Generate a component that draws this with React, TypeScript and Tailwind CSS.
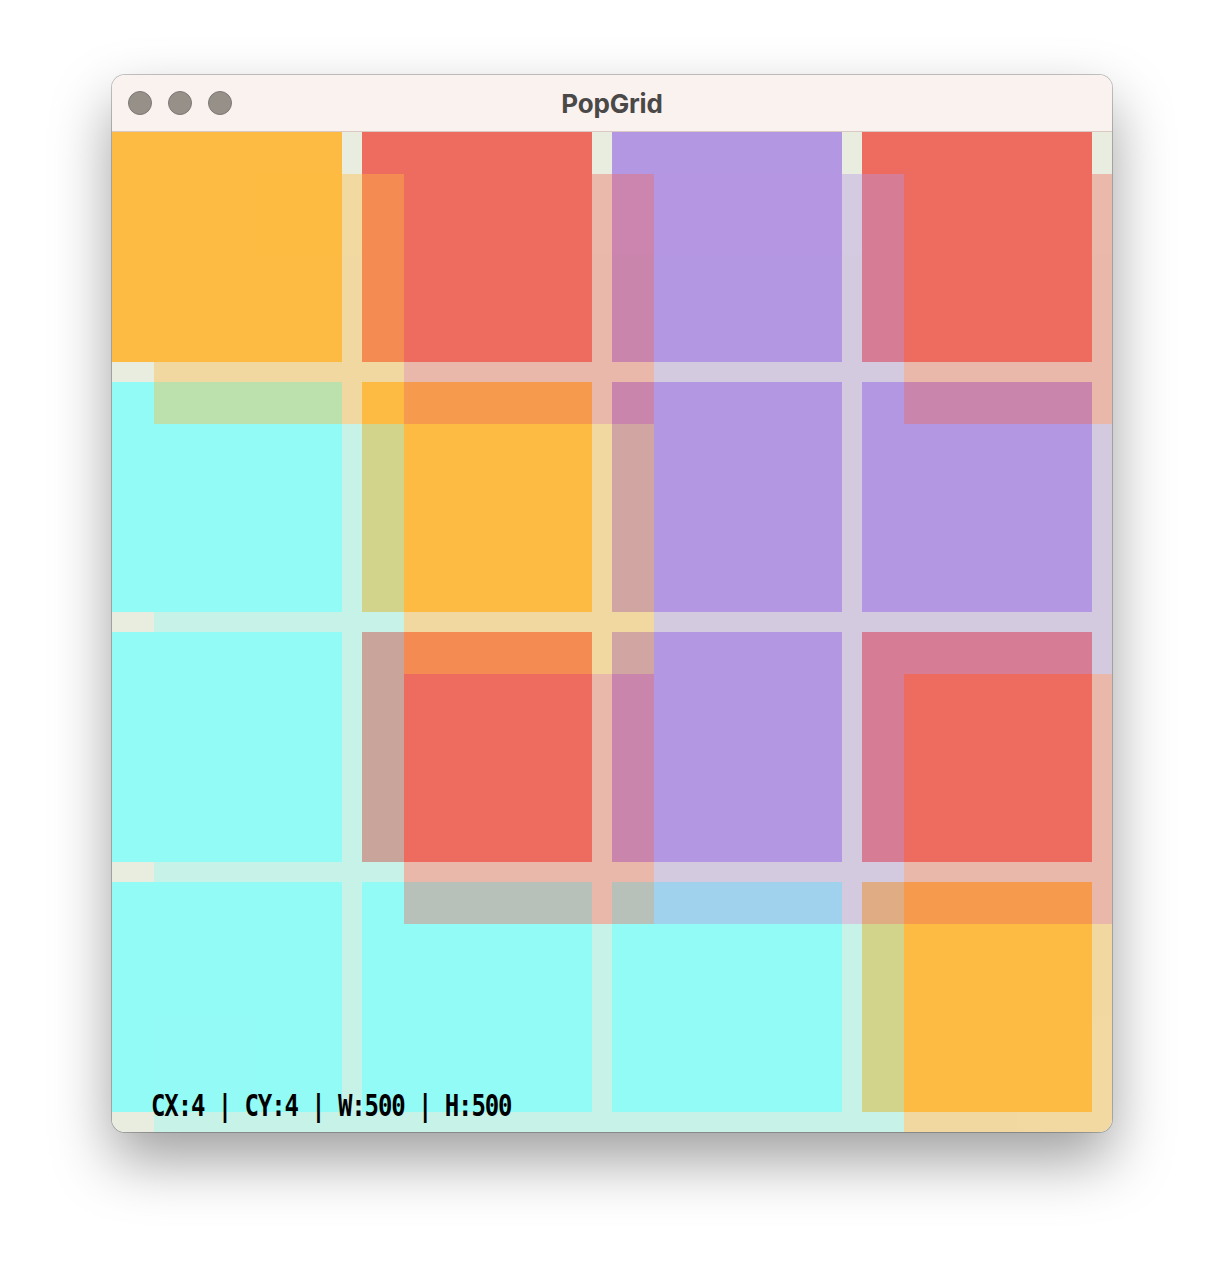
const palette = {
  y: "bg-[#fdbb43]",
  r: "bg-[#ed6b5f]",
  p: "bg-[#b497e3]",
  c: "bg-[#93fbf6]",
};

type Swatch = keyof typeof palette;

const board: Swatch[][] = [
  ["y", "r", "p", "r"],
  ["c", "y", "p", "p"],
  ["c", "r", "p", "r"],
  ["c", "c", "c", "y"],
];

function TrafficLight() {
  return <div className="h-[24px] w-[24px] rounded-full border border-[#7d7874] bg-[#969089]" />;
}

export default function App() {
  const cells = board.flat();
  return (
    <div className="flex min-h-[1280px] w-full justify-center bg-white pt-[75px]">
      <div className="relative h-[1057px] w-[1000px] overflow-hidden rounded-[13px] shadow-[0_0_0_1px_rgba(0,0,0,0.22),0_28px_60px_rgba(0,0,0,0.38)]">
        <div className="relative flex h-[57px] items-center border-b border-[#d9c9c2] bg-[#faf2ef] px-[16px]">
          <div className="flex gap-[16px]">
            <TrafficLight />
            <TrafficLight />
            <TrafficLight />
          </div>
          <div className="absolute inset-0 flex items-center justify-center pt-[1px] font-['Inter','Liberation_Sans',sans-serif] text-[26px] font-bold tracking-[-0.2px] text-[#4b4848]">
            PopGrid
          </div>
        </div>

        <div className="relative h-[1000px] w-[1000px] overflow-hidden bg-[#e9eddf]">
          <div className="grid w-[980px] grid-cols-4 gap-[20px]">
            {cells.map((s, i) => (
              <div key={i} className={`h-[230px] ${palette[s]}`} />
            ))}
          </div>

          {/* echo layer, shifted and see-through */}
          <div className="absolute left-[42px] top-[42px] grid w-[1000px] grid-cols-4 opacity-40">
            {cells.map((s, i) => (
              <div key={i} className={`h-[250px] ${palette[s]}`} />
            ))}
          </div>

          <div className="absolute left-[39px] top-[960px] origin-bottom-left scale-y-[1.25] whitespace-pre font-['DejaVu_Sans_Mono',monospace] text-[24px] font-bold tracking-[-1.1px] text-black">
            CX:4 | CY:4 | W:500 | H:500
          </div>
        </div>
      </div>
    </div>
  );
}
